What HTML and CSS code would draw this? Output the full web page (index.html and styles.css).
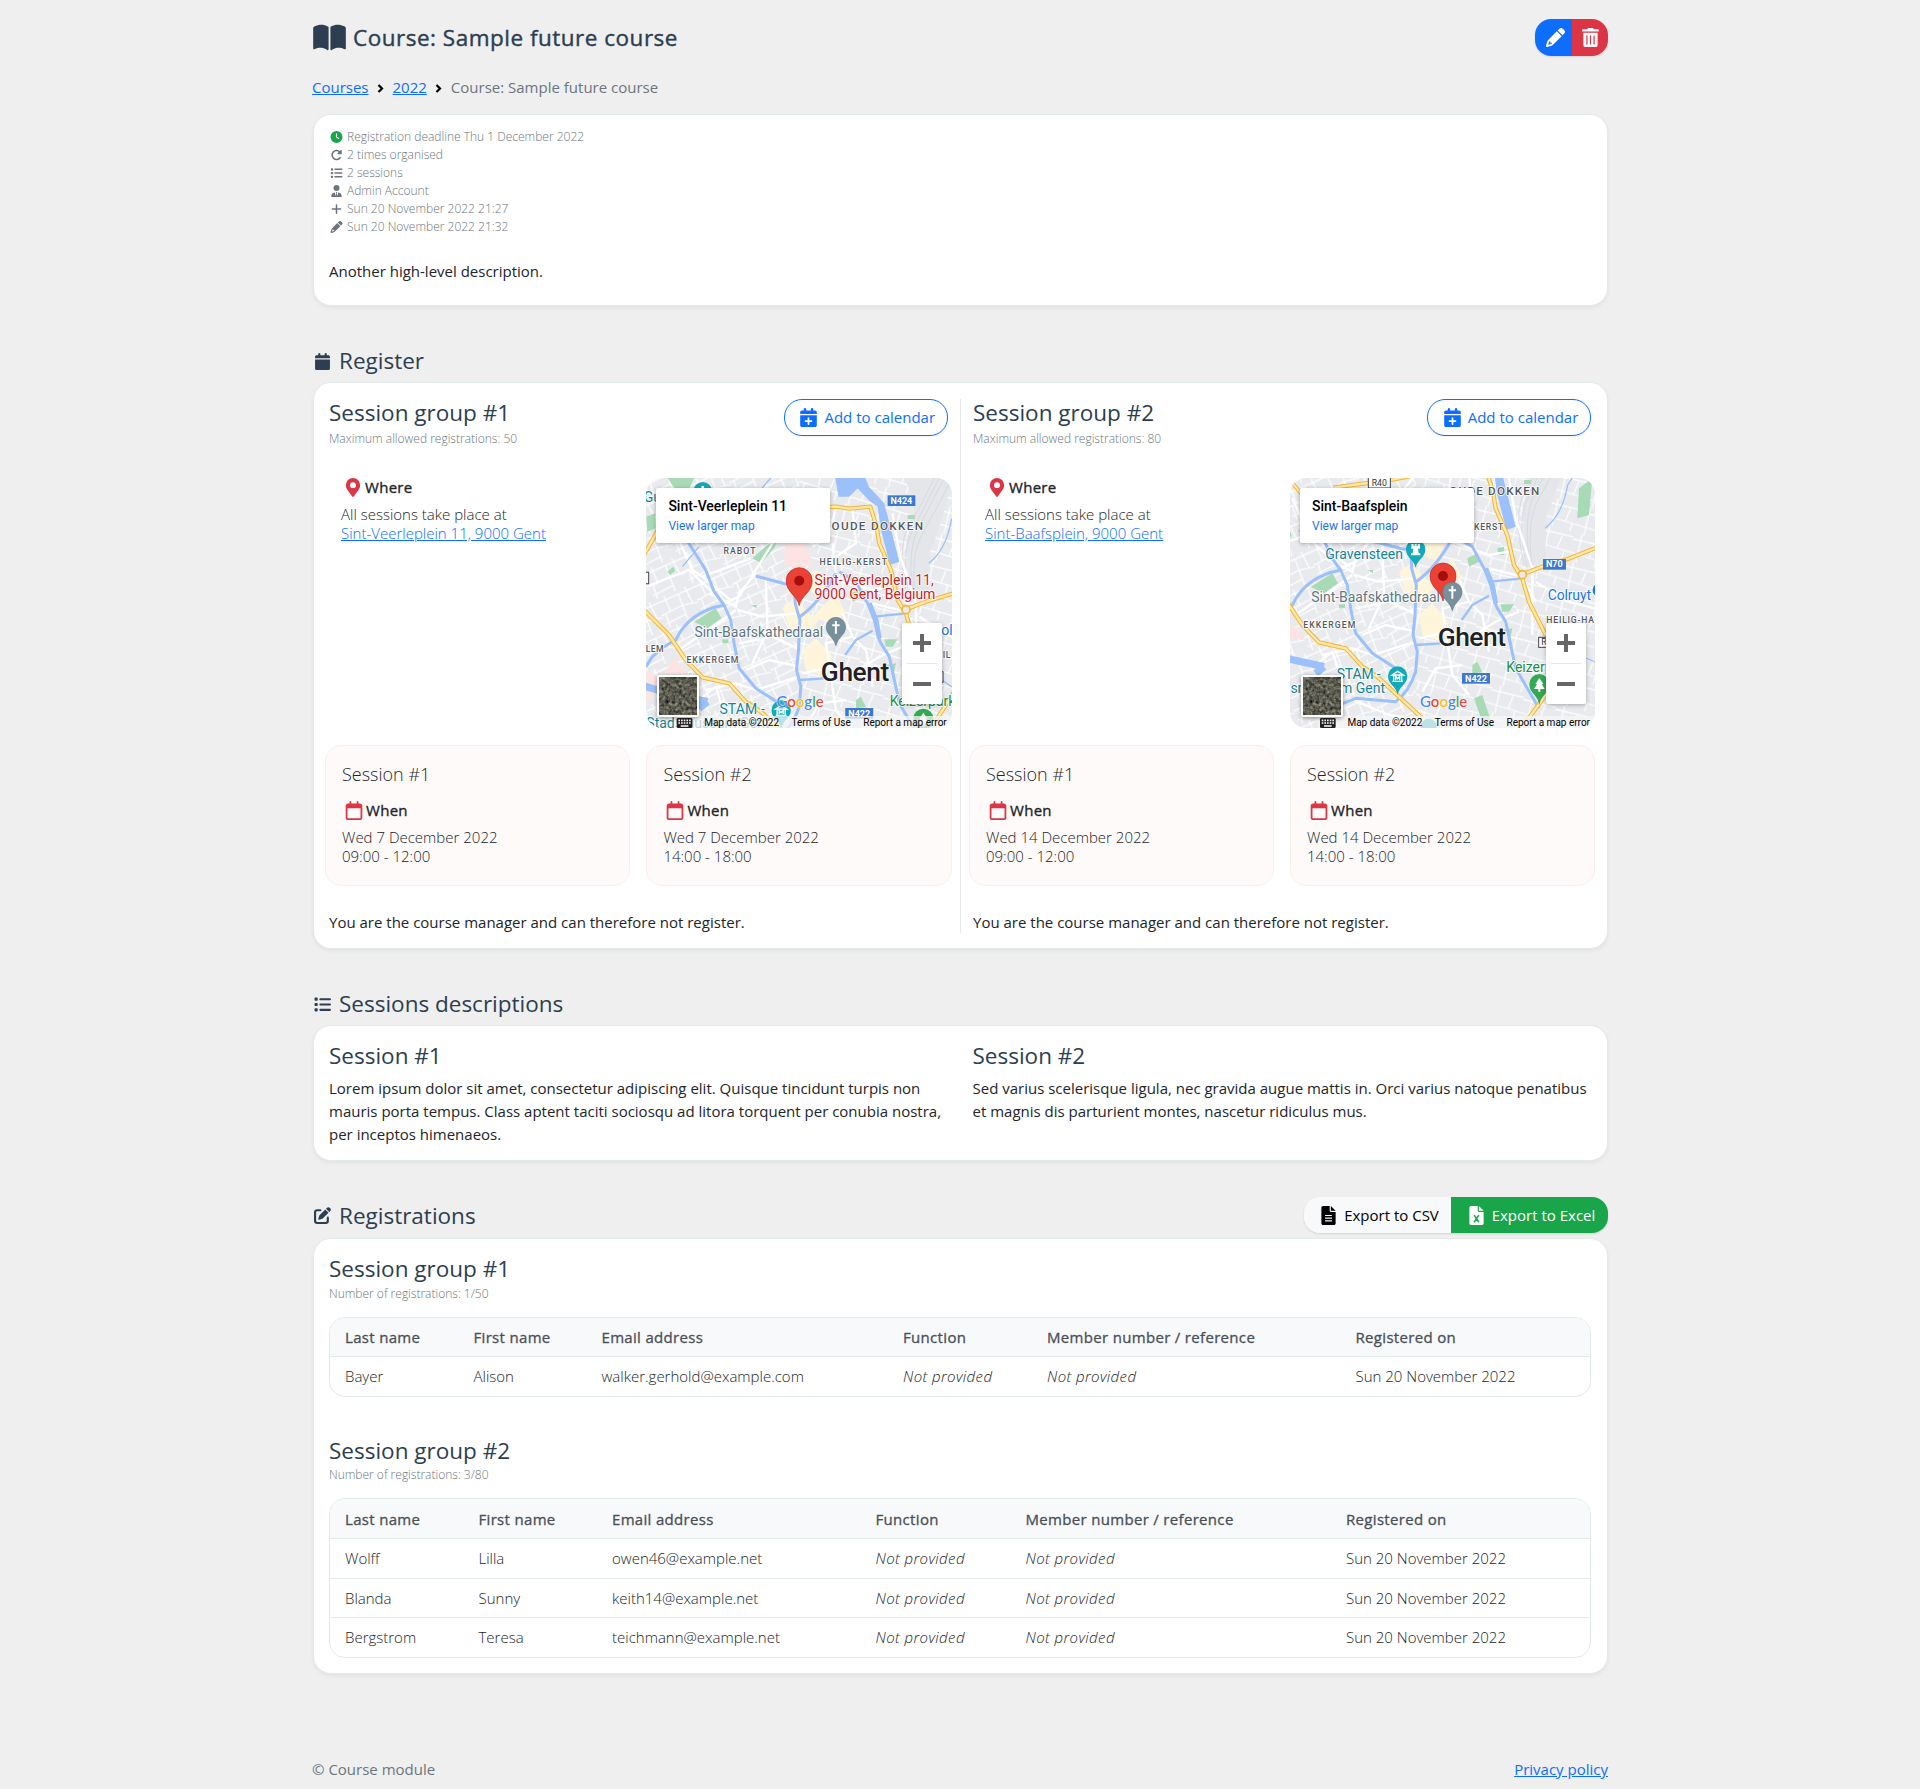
FILE: index.html
```html
<!DOCTYPE html>
<html lang="en">
<head>
<meta charset="utf-8">
<title>Course: Sample future course</title>
<link rel="stylesheet" href="styles.css">
</head>
<body>
<svg class="defs" aria-hidden="true">
  <defs>
    <symbol id="i-book" viewBox="0 0 576 512"><path d="M144.3 32C106.900 31.300 63.700 41.400 18.600 61.300C7.200 66.300 0 78 0 90.400V448c0 11.600 12 19.600 22.400 14.700c126.300-59.100 219.800 11 223.800 14C249 478.900 252.500 480 256 480c12.400 0 16-11.400 16-16V80c0-5.200-2.500-10-6.800-13C263.300 65.600 216.700 33.400 144.300 32zM557.400 61.300c-45.100-19.800-88.500-29.600-125.700-29.300c-72.400 1.300-118.100 33.600-120.900 35C306.500 70 304 74.800 304 80v384c0 4.400 3.500 16 16 16c3.500 0 6.900-1.100 9.800-3.300c3.900-3 97.400-73.200 223.800-14C564 467.600 576 459.600 576 448V90.400C576 78 568.800 66.300 557.400 61.300z"/></symbol>
    <symbol id="i-pencil" viewBox="0 0 512 512"><path fill-rule="evenodd" d="M421.600 219.700 291.700 89.800 58.600 322.900c-10.400 10.400-18 23.300-22.200 37.400L1 480.700c-2.500 8.400-.2 17.500 6.100 23.700s15.300 8.500 23.700 6.100l120.300-35.400c14.100-4.200 27-11.800 37.400-22.200zM160 399.400l-9.100 22.700c-4 3.100-8.500 5.400-13.300 6.900L59.400 452l23-78.100c1.400-4.900 3.800-9.400 6.900-13.300l22.700-9.100v32c0 8.800 7.200 16 16 16zM362.700 18.700 314.300 67.100 444.200 197l48.400-48.400c25-25 25-65.500 0-90.500L453.300 18.700c-25-25-65.500-25-90.600 0z"/></symbol>
    <symbol id="i-trash" viewBox="0 0 448 512"><path d="M32 464a48 48 0 0 0 48 48h288a48 48 0 0 0 48-48V128H32zm272-256a16 16 0 0 1 32 0v224a16 16 0 0 1-32 0zm-96 0a16 16 0 0 1 32 0v224a16 16 0 0 1-32 0zm-96 0a16 16 0 0 1 32 0v224a16 16 0 0 1-32 0zM432 32H312l-9.400-18.700A24 24 0 0 0 281.100 0H166.800a23.700 23.700 0 0 0-21.400 13.300L136 32H16A16 16 0 0 0 0 48v32a16 16 0 0 0 16 16h416a16 16 0 0 0 16-16V48a16 16 0 0 0-16-16z"/></symbol>
    <symbol id="i-clock" viewBox="0 0 512 512"><path fill-rule="evenodd" d="M256 512a256 256 0 1 0 0-512 256 256 0 0 0 0 512zM232 120V256c0 8 4 15.500 10.700 20l96 64c11 7.400 25.900 4.400 33.300-6.700s4.400-25.900-6.700-33.300L280 243.200V120c0-13.300-10.700-24-24-24s-24 10.700-24 24z"/></symbol>
    <symbol id="i-redo" viewBox="0 0 512 512"><path d="M410 370A190 190 0 1 1 400 128" fill="none" stroke="currentColor" stroke-width="66" stroke-linecap="round"/><path d="M480 60v140q0 24-24 24H316q-40-5-16-38L440 46q34-22 40 14z"/></symbol>
    <symbol id="i-list" viewBox="0 0 512 512"><path d="M40 48h48q24 0 24 24v48q0 24-24 24H40q-24 0-24-24V72q0-24 24-24zm0 160h48q24 0 24 24v48q0 24-24 24H40q-24 0-24-24v-48q0-24 24-24zm0 160h48q24 0 24 24v48q0 24-24 24H40q-24 0-24-24v-48q0-24 24-24zM192 64h288a32 32 0 0 1 0 64H192a32 32 0 0 1 0-64zm0 160h288a32 32 0 0 1 0 64H192a32 32 0 0 1 0-64zm0 160h288a32 32 0 0 1 0 64H192a32 32 0 0 1 0-64z"/></symbol>
    <symbol id="i-user" viewBox="0 0 448 512"><path d="M224 256a128 128 0 1 0 0-256 128 128 0 0 0 0 256zm-15 42c-10 0-17 12-12 21l16 32-29 114-33-134c-2-8-10-14-18-12C57 337 0 400 0 482c0 16 14 30 30 30h388c16 0 30-14 30-30 0-82-57-145-133-163-8-2-16 4-18 12l-33 134-29-114 16-32c5-9-2-21-12-21z"/></symbol>
    <symbol id="i-plus" viewBox="0 0 448 512"><path d="M256 80a32 32 0 0 0-64 0v144H48a32 32 0 0 0 0 64h144v144a32 32 0 0 0 64 0V288h144a32 32 0 0 0 0-64H256z"/></symbol>
    <symbol id="i-cal" viewBox="0 0 448 512"><path d="M96 32V64H48C21.500 64 0 85.500 0 112v48H448V112c0-26.500-21.500-48-48-48H352V32a32 32 0 0 0-64 0V64H160V32a32 32 0 0 0-64 0zM448 192H0V464c0 26.500 21.500 48 48 48H400c26.500 0 48-21.500 48-48z"/></symbol>
    <symbol id="i-calplus" viewBox="0 0 448 512"><path fill-rule="evenodd" d="M96 32V64H48C21.500 64 0 85.500 0 112v48H448V112c0-26.500-21.500-48-48-48H352V32a32 32 0 0 0-64 0V64H160V32a32 32 0 0 0-64 0zM448 192H0V464c0 26.500 21.500 48 48 48H400c26.500 0 48-21.500 48-48zM224 248a24 24 0 0 1 24 24v56h56a24 24 0 0 1 0 48h-56v56a24 24 0 0 1-48 0v-56h-56a24 24 0 0 1 0-48h56v-56a24 24 0 0 1 24-24z"/></symbol>
    <symbol id="i-calday" viewBox="0 0 448 512"><path fill-rule="evenodd" d="M152 24a24 24 0 0 0-48 0V64H64C28.700 64 0 92.700 0 128V448c0 35.300 28.700 64 64 64H384c35.300 0 64-28.700 64-64V128c0-35.300-28.700-64-64-64H344V24a24 24 0 0 0-48 0V64H152zM48 192H400V448q0 16-16 16H64q-16 0-16-16z"/></symbol>
    <symbol id="i-pin" viewBox="0 0 384 512"><path fill-rule="evenodd" d="M172.300 501.700C27 291 0 269.400 0 192a192 192 0 0 1 384 0c0 77.400-27 99-172.300 309.700-9.500 13.800-29.900 13.800-39.400 0zM192 272a80 80 0 1 0 0-160 80 80 0 0 0 0 160z"/></symbol>
    <symbol id="i-edit" viewBox="0 0 512 512"><path d="M490.300 40.400c21.900 21.900 21.900 57.300 0 79.200l-30 30.100-98-98 30.100-30c21.900-21.900 57.300-21.900 79.200 0zM172.400 241.700 339.700 74.300l98 98-167.400 167.300c-6.100 6.200-13.600 10.800-21.900 13.600l-88.800 29.600c-20 5-36-10-30.400-30.400l29.600-88.800c2.800-8.300 7.400-15.800 13.600-21.900zM192 64a32 32 0 0 1 0 64H96a32 32 0 0 0-32 32v256a32 32 0 0 0 32 32h256a32 32 0 0 0 32-32v-96a32 32 0 0 1 64 0v96a96 96 0 0 1-96 96H96a96 96 0 0 1-96-96V160a96 96 0 0 1 96-96z"/></symbol>
    <symbol id="i-csv" viewBox="0 0 384 512"><path fill-rule="evenodd" d="M256 0v128h128zM224 128V0H48C21.500 0 0 21.500 0 48v416c0 26.500 21.500 48 48 48h288c26.500 0 48-21.500 48-48V160H256c-17.700 0-32-14.300-32-32zM112 240h160a16 16 0 0 1 0 32H112a16 16 0 0 1 0-32zm0 72h160a16 16 0 0 1 0 32H112a16 16 0 0 1 0-32zm0 72h160a16 16 0 0 1 0 32H112a16 16 0 0 1 0-32z"/></symbol>
    <symbol id="i-xls" viewBox="0 0 384 512"><path d="M256 0v128h128zM224 128V0H48C21.500 0 0 21.500 0 48v416c0 26.500 21.500 48 48 48h288c26.500 0 48-21.500 48-48V160H256c-17.700 0-32-14.300-32-32z"/><path d="M138 258 246 424M246 258 138 424" stroke="#19a54a" stroke-width="42" stroke-linecap="round"/></symbol>

    <pattern id="streets" width="116" height="94" patternUnits="userSpaceOnUse" patternTransform="rotate(-24)">
      <path d="M0 12H116M0 52L70 47L116 58M30 0V50M72 12L68 94M98 0L101 56M14 52L10 94M0 80L68 76" fill="none" stroke="#fff" stroke-width="3.500"/>
    </pattern>
    <pattern id="streets-east" width="100" height="84" patternUnits="userSpaceOnUse" patternTransform="rotate(17)">
      <path d="M0 20L100 14M0 60H100M24 0L30 84M68 20L64 60M86 60V84" fill="none" stroke="#fff" stroke-width="3.500"/>
    </pattern>
    <filter id="aerial" color-interpolation-filters="sRGB"><feTurbulence type="fractalNoise" baseFrequency=".3" numOctaves="4" seed="8"/><feColorMatrix values=".5 .4 0 0 -.09  .45 .45 0 0 -.09  .35 .4 0 0 -.06  0 0 0 0 1"/></filter>

    <g id="city">
      <rect x="0" y="0" width="1060" height="900" fill="#e8eaed"/>
      <rect x="0" y="0" width="480" height="900" fill="url(#streets)"/>
      <rect x="480" y="0" width="580" height="900" fill="url(#streets-east)"/>
      <path d="M790 20Q850 110 800 210L812 390H870V250Q920 130 936 24z" fill="#e4e6ea"/>
      <g fill="#fde4e2"><path d="M437 220 490 205 520 275 480 305 435 280zM75 610 105 565 150 612zM21 700 80 640 40 610 0 590V700z"/></g>
      <g fill="#fef5da"><path d="M430 415 465 385 520 440 590 370 620 430 580 460 540 445 520 480 490 500 450 470zM490 540 530 505 580 560 560 620 500 600zM525 300 570 320 545 380 500 360z"/></g>
      <g fill="#a8dab5"><path d="M85 24H165L150 58H110zM340 265 385 225 410 220 405 235 365 280zM165 455 230 415 247 445 205 475zM85 305 103 290 108 303 93 315zM22 140 48 130 50 175 25 185zM140 195H165V225zM250 508H268V520H250zM335 405H352V415zM650 690 665 680 680 712 650 715zM735 508H775L760 530H740zM635 370 665 355 670 380 640 395zM725 340 745 335 745 360 728 360zM805 135H827V147H805zM655 790 680 780 710 870 690 890zM970 160 1010 130 1000 240 965 250zM740 585 770 580 765 605z"/></g>
      <g fill="none" stroke="#c9ccd3" stroke-width="1.500"><path d="M900 24Q860 100 820 180T815 400M915 24Q870 110 835 180T825 400M885 24Q850 100 810 165T805 390M930 40Q890 120 850 190T830 400"/></g>
      <g fill="none" stroke="#fff" stroke-width="7" stroke-linejoin="round"><path d="M21 350 150 300 255 400 300 380 400 220 510 80M110 190 160 300 190 320 335 265M120 540 250 450 290 420M295 420 370 440 470 430M210 370 290 410 300 370 350 310M190 320 280 395M300 520 400 500 475 535M320 600 390 570 480 590M490 610 580 590 640 610 720 560 790 530M610 430 640 500 680 540 700 650M640 500 560 520 590 720 640 780M700 400 800 425 840 500M580 220 590 320 700 360 760 350M590 110 570 200 520 230M760 130 780 250 830 400 830 600M840 440 936 500 1018 520M200 660 290 640 350 660 480 620M180 690 230 650 270 774M280 790 400 840 530 860M640 120 650 220 590 260M380 330 385 480 340 580M500 770 540 700 620 690"/></g>
      <g fill="none" stroke="#9cc0fa" stroke-width="9" stroke-linejoin="round">
        <path fill="#9cc0fa" stroke="none" d="M588 24H678L690 52 735 100 780 275 752 285 725 180 715 110 690 92 655 55 630 80H598z"/>
        <path d="M140 205 200 300 225 365 255 405 275 450 285 520 300 595 350 655 420 700M255 405Q150 425 110 510Q70 530 40 560L21 590M350 318 440 342 465 342 468 400 482 450 478 540 472 600 485 650 480 710Q460 770 420 800L300 790 200 830M482 440Q540 400 590 310M600 305 650 335 690 410 705 450 722 515M722 515 750 560 780 700 850 820"/>
        <path stroke-width="15" d="M690 400 710 450 720 505"/>
        <path stroke-width="7" d="M705 440 800 430M618 555 650 510 700 482M478 630 560 625"/>
        <path stroke-width="22" d="M15 648 75 665M100 672 205 695M180 715 205 695"/>
        <path stroke-width="4" d="M395 24Q360 60 345 95M868 280Q920 240 936 150L965 105M130 290 180 230M865 600 936 650 1018 680"/>
      </g>
      <g fill="none" stroke-linejoin="round">
        <path stroke="#f7b52c" stroke-width="13" d="M15 420 90 495 140 570 190 622 270 640 320 695 365 725 500 850M233 158 403 135 520 112 590 110 630 116 693 110 712 170 720 220 755 300 775 390 800 430 820 500 870 600M15 255 60 175 90 100M800 418 860 395 936 372 1030 335M960 640 910 720 870 780 790 890"/>
        <path stroke="#fde9b0" stroke-width="7" d="M15 420 90 495 140 570 190 622 270 640 320 695 365 725 500 850M233 158 403 135 520 112 590 110 630 116 693 110 712 170 720 220 755 300 775 390 800 430 820 500 870 600M15 255 60 175 90 100M800 418 860 395 936 372 1030 335M960 640 910 720 870 780 790 890"/>
        <circle cx="800" cy="419" r="12" fill="#e8eaed" stroke="#f7b52c" stroke-width="5"/>
      </g>
    </g>
    <g id="church"><path d="M0 42C-5 18-29 10-29-14a29 29 0 0 1 58 0C29 10 5 18 0 42z" fill="#78909c" stroke="#607d8b" stroke-width="2"/><path d="M0-32V6M-11-19H11" stroke="#fff" stroke-width="6"/></g>
    <g id="place"><path d="M0 75C-5 45-39 35-39 0a39 39 0 0 1 78 0C39 35 5 45 0 75z" fill="#ea4335" stroke="#c5221f" stroke-width="2"/><circle r="15" fill="#a50e0e"/></g>
    <g id="museum"><path d="M0 52C-5 25-29 22-29-4a29 29 0 0 1 58 0C29 22 5 25 0 52z" fill="#12a9b8"/><path d="M-17-7 0-18 17-7zM-16 12H16M-12-5V11M12-5V11M-6 9V-3L0 4 6-3V9" fill="none" stroke="#fff" stroke-width="4"/></g>
    <g id="park"><path d="M0 57C-5 25-30 22-30-6a30 30 0 0 1 60 0C30 22 5 25 0 57z" fill="#34a853"/><path d="M0-24 12-6H7L16 9H3V17H-3V9H-16L-7-6H-12z" fill="#fff"/></g>
    <g id="keys"><rect width="47" height="30" rx="4" fill="#222"/><path d="M5 7H43M5 15H43" stroke="#fff" stroke-width="5" stroke-dasharray="5 3"/><path d="M12 24H35" stroke="#fff" stroke-width="4"/></g>
  </defs>
</svg>

<div class="container">
  <header class="page-head">
    <h1><svg class="ic-book"><use href="#i-book"/></svg>Course: Sample future course</h1>
    <div class="btn-group">
      <a class="btn btn-blue"><svg class="ic-btn"><use href="#i-pencil"/></svg></a>
      <a class="btn btn-red"><svg class="ic-btn"><use href="#i-trash"/></svg></a>
    </div>
  </header>

  <nav class="crumbs"><a>Courses</a><svg viewBox="0 0 7 9"><path d="M1.500 1 5 4.500 1.500 8"/></svg><a>2022</a><svg viewBox="0 0 7 9"><path d="M1.500 1 5 4.500 1.500 8"/></svg><span>Course: Sample future course</span></nav>

  <section class="card about">
    <ul class="meta">
      <li><svg class="green"><use href="#i-clock"/></svg><span>Registration deadline Thu 1 December 2022</span></li>
      <li><svg><use href="#i-redo"/></svg><span>2 times organised</span></li>
      <li><svg><use href="#i-list"/></svg><span>2 sessions</span></li>
      <li><svg><use href="#i-user"/></svg><span>Admin Account</span></li>
      <li><svg><use href="#i-plus"/></svg><span>Sun 20 November 2022 21:27</span></li>
      <li><svg><use href="#i-pencil"/></svg><span>Sun 20 November 2022 21:32</span></li>
    </ul>
    <p>Another high-level description.</p>
  </section>

  <h2 class="section-head"><svg><use href="#i-cal"/></svg>Register</h2>
  <section class="card register">
    <div class="group">
      <div class="group-head">
        <div><h3>Session group #1</h3><small>Maximum allowed registrations: 50</small></div>
        <a class="btn btn-outline"><svg><use href="#i-calplus"/></svg>Add to calendar</a>
      </div>
      <div class="tiles">
        <div class="where">
          <h4><svg><use href="#i-pin"/></svg>Where</h4>
          <p>All sessions take place at<br><a>Sint-Veerleplein 11, 9000 Gent</a></p>
        </div>
        <div class="map">
          <svg class="map-art" viewBox="21 24 915 750" preserveAspectRatio="none">
            <use href="#city"/>
            <circle cx="191" cy="64" r="28" fill="#12a9b8"/><path d="M191 48V60" stroke="#fff" stroke-width="8"/>
            <g class="halo">
              <text x="14" y="95" class="poi teal">Gu</text>
              <text x="253" y="251" class="area" textLength="98">RABOT</text>
              <text x="577" y="180" class="area big" textLength="276">OUDE DOKKEN</text>
              <text x="541" y="284" class="area" textLength="204">HEILIG-KERST</text>
              <text x="20" y="545" class="area" textLength="56">LEM</text>
              <text x="142" y="578" class="area" textLength="158">EKKERGEM</text>
              <text x="910" y="564" class="area">IL</text>
              <text x="166" y="500" class="poi grey" textLength="386">Sint-Baafskathedraal</text>
              <text x="545" y="633" class="city" textLength="205">Ghent</text>
              <text x="526" y="346" class="poi red" textLength="357">Sint-Veerleplein 11,</text>
              <text x="526" y="387" class="poi red" textLength="362">9000 Gent, Belgium</text>
              <text x="906" y="494" class="poi blue">ol</text>
              <text x="241" y="731" class="poi teal" textLength="136">STAM -</text>
              <text x="22" y="773" class="poi teal">Stadsmuseum Gent</text>
              <text x="751" y="708" class="poi green">Keizerpark</text>
            </g>
            <path d="M15 307H29V341H15M905 605H911V637H905" fill="#fff" stroke="#444" stroke-width="3"/>
            <rect x="745" y="76" width="83" height="32" fill="#3b78ce"/><text x="786" y="102" class="shield">N424</text>
            <rect x="618" y="714" width="84" height="32" fill="#3b78ce"/><text x="660" y="740" class="shield">N422</text>
            <use href="#church" x="590" y="485"/><use href="#museum" x="426" y="724"/><use href="#park" x="852" y="752"/>
            <use href="#place" x="480" y="332"/>
            <rect x="105" y="738" width="831" height="36" fill="#f5f5f5" opacity=".75"/>
            <use href="#keys" x="113" y="744"/>
          </svg>
          <div class="map-info"><b>Sint-Veerleplein 11</b><a>View larger map</a></div>
          <svg class="map-thumb"><rect width="38" height="38" filter="url(#aerial)"/></svg>
          <div class="map-zoom"><i class="z-in"></i><i class="z-out"></i></div>
          <div class="map-google"><span>G</span><span>o</span><span>o</span><span>g</span><span>l</span><span>e</span></div>
          <div class="map-foot"><span>Map data ©2022</span><span>Terms of Use</span><span>Report a map error</span></div>
        </div>
        <div class="session"><h4>Session #1</h4><h5><svg><use href="#i-calday"/></svg>When</h5><p>Wed 7 December 2022<br>09:00 - 12:00</p></div>
        <div class="session"><h4>Session #2</h4><h5><svg><use href="#i-calday"/></svg>When</h5><p>Wed 7 December 2022<br>14:00 - 18:00</p></div>
      </div>
      <p class="notice">You are the course manager and can therefore not register.</p>
    </div>
    <div class="group">
      <div class="group-head">
        <div><h3>Session group #2</h3><small>Maximum allowed registrations: 80</small></div>
        <a class="btn btn-outline"><svg><use href="#i-calplus"/></svg>Add to calendar</a>
      </div>
      <div class="tiles">
        <div class="where">
          <h4><svg><use href="#i-pin"/></svg>Where</h4>
          <p>All sessions take place at<br><a>Sint-Baafsplein, 9000 Gent</a></p>
        </div>
        <div class="map">
          <svg class="map-art" viewBox="30 24 915 750" preserveAspectRatio="none">
            <use href="#city" x="-73" y="-105"/>
            <path d="M25 25 80 90" stroke="#f7b52c" stroke-width="12"/><path d="M25 25 80 90" stroke="#fde9b0" stroke-width="6"/>
            <g class="halo">
              <text x="508" y="75" class="area big" textLength="272">OUDE DOKKEN</text>
              <text x="582" y="179" class="area" textLength="90">KERST</text>
              <text x="70" y="473" class="area" textLength="158">EKKERGEM</text>
              <text x="799" y="458" class="area" textLength="145">HEILIG-HA</text>
              <text x="136" y="267" class="poi teal" textLength="233">Gravensteen</text>
              <text x="803" y="390" class="poi blue" textLength="130">Colruyt</text>
              <text x="94" y="396" class="poi grey" textLength="386">Sint-Baafskathedraal</text>
              <text x="473" y="528" class="city" textLength="205">Ghent</text>
              <text x="170" y="627" class="poi teal" textLength="132">STAM -</text>
              <text x="315" y="669" class="poi teal" text-anchor="end">smuseum Gent</text>
              <text x="679" y="606" class="poi green">Keizerpark</text>
            </g>
            <circle cx="958" cy="360" r="20" fill="#1a73e8"/>
            <rect x="265" y="20" width="66" height="34" fill="#fff" stroke="#444" stroke-width="3"/><text x="298" y="48" class="route">R40</text>
            <rect x="776" y="502" width="60" height="30" fill="#fff" stroke="#444" stroke-width="3"/><text x="792" y="526" class="route">R</text>
            <rect x="789" y="267" width="69" height="32" fill="#3b78ce"/><text x="823" y="291" class="shield">N70</text>
            <rect x="546" y="609" width="84" height="32" fill="#3b78ce"/><text x="588" y="636" class="shield">N422</text>
            <path d="M407 293C402 268 378 264 378 238a29 29 0 0 1 58 0C436 264 412 268 407 293z" fill="#12a9b8"/><path d="M393 256H421V250H416L414 236H420V222H413V228H410V222H404V228H401V222H394V236H400L398 250H393z" fill="#fff"/>
            <use href="#place" x="489" y="318"/><use href="#church" x="517" y="380"/>
            <use href="#museum" x="353" y="622"/><use href="#park" x="778" y="648"/>
            <circle cx="446" cy="770" r="24" fill="#12a9b8"/>
            <rect x="114" y="738" width="831" height="36" fill="#f5f5f5" opacity=".75"/>
            <use href="#keys" x="120" y="744"/>
          </svg>
          <div class="map-info"><b>Sint-Baafsplein</b><a>View larger map</a></div>
          <svg class="map-thumb"><rect width="38" height="38" filter="url(#aerial)"/></svg>
          <div class="map-zoom"><i class="z-in"></i><i class="z-out"></i></div>
          <div class="map-google"><span>G</span><span>o</span><span>o</span><span>g</span><span>l</span><span>e</span></div>
          <div class="map-foot"><span>Map data ©2022</span><span>Terms of Use</span><span>Report a map error</span></div>
        </div>
        <div class="session"><h4>Session #1</h4><h5><svg><use href="#i-calday"/></svg>When</h5><p>Wed 14 December 2022<br>09:00 - 12:00</p></div>
        <div class="session"><h4>Session #2</h4><h5><svg><use href="#i-calday"/></svg>When</h5><p>Wed 14 December 2022<br>14:00 - 18:00</p></div>
      </div>
      <p class="notice">You are the course manager and can therefore not register.</p>
    </div>
  </section>

  <h2 class="section-head"><svg><use href="#i-list"/></svg>Sessions descriptions</h2>
  <section class="card descriptions">
    <div><h3>Session #1</h3><p>Lorem ipsum dolor sit amet, consectetur adipiscing elit. Quisque tincidunt turpis non mauris porta tempus. Class aptent taciti sociosqu ad litora torquent per conubia nostra, per inceptos himenaeos.</p></div>
    <div><h3>Session #2</h3><p>Sed varius scelerisque ligula, nec gravida augue mattis in. Orci varius natoque penatibus et magnis dis parturient montes, nascetur ridiculus mus.</p></div>
  </section>

  <div class="section-row">
    <h2 class="section-head"><svg><use href="#i-edit"/></svg>Registrations</h2>
    <div class="btn-group export">
      <a class="btn btn-light"><svg><use href="#i-csv"/></svg>Export to CSV</a>
      <a class="btn btn-green"><svg><use href="#i-xls"/></svg>Export to Excel</a>
    </div>
  </div>
  <section class="card registrations">
    <h3>Session group #1</h3><small>Number of registrations: 1/50</small>
    <div class="table-wrap">
      <table class="t-one">
        <colgroup><col class="c1"><col class="c2"><col class="c3"><col class="c4"><col class="c5"><col></colgroup>
        <thead><tr><th>Last name</th><th>First name</th><th>Email address</th><th>Function</th><th>Member number / reference</th><th>Registered on</th></tr></thead>
        <tbody><tr><td>Bayer</td><td>Alison</td><td>walker.gerhold@example.com</td><td><em>Not provided</em></td><td><em>Not provided</em></td><td>Sun 20 November 2022</td></tr></tbody>
      </table>
    </div>
    <h3>Session group #2</h3><small>Number of registrations: 3/80</small>
    <div class="table-wrap">
      <table class="t-two">
        <colgroup><col class="c1"><col class="c2"><col class="c3"><col class="c4"><col class="c5"><col></colgroup>
        <thead><tr><th>Last name</th><th>First name</th><th>Email address</th><th>Function</th><th>Member number / reference</th><th>Registered on</th></tr></thead>
        <tbody>
          <tr><td>Wolff</td><td>Lilla</td><td>owen46@example.net</td><td><em>Not provided</em></td><td><em>Not provided</em></td><td>Sun 20 November 2022</td></tr>
          <tr><td>Blanda</td><td>Sunny</td><td>keith14@example.net</td><td><em>Not provided</em></td><td><em>Not provided</em></td><td>Sun 20 November 2022</td></tr>
          <tr><td>Bergstrom</td><td>Teresa</td><td>teichmann@example.net</td><td><em>Not provided</em></td><td><em>Not provided</em></td><td>Sun 20 November 2022</td></tr>
        </tbody>
      </table>
    </div>
  </section>

  <footer><span>© Course module</span><a>Privacy policy</a></footer>
</div>
</body>
</html>
```
FILE: styles.css
```css
* { box-sizing: border-box; }
body { margin: 0; background: #efefef; font: 400 15px/23px "Open Sans", "Noto Sans", sans-serif; color: #212529; }
h1, h2, h3, h4, h5, p, ul { margin: 0; padding: 0; font-weight: 400; }
svg { fill: currentColor; flex: none; }
a { color: #0d6efd; text-decoration: underline; }
.defs { position: absolute; width: 0; height: 0; }
.container { width: 1296px; margin: 0 auto; height: 1789px; }

.page-head { display: flex; justify-content: space-between; padding-top: 19px; height: 74px; }
h1 { display: flex; align-items: center; height: 37px; font-size: 22.500px; letter-spacing: .5px; -webkit-text-stroke: .4px currentColor; color: #2c3e50; }
.ic-book { width: 33px; height: 29px; margin: 0 7px 0 1px; }
.btn { display: flex; align-items: center; justify-content: center; text-decoration: none; height: 37px; }
.btn svg { width: 19px; height: 19px; }
.btn-group { display: flex; height: 37px; border-radius: 16px; overflow: hidden; box-shadow: 0 1px 2px rgba(0,0,0,.12); }
.btn-blue, .btn-red { color: #fff; width: 36.500px; }
.btn-blue { background: #0d6efd; padding-left: 4px; }
.btn-red { background: #dc3545; padding-left: 1px; }

.crumbs { display: flex; align-items: center; height: 26px; color: #6c757d; }
.crumbs svg { width: 7px; height: 9px; margin: 2px 9px 0 8px; fill: none; stroke: #000; stroke-width: 2.200; }

.card { background: #fff; border: 1px solid #e3eaea; border-radius: 18px; box-shadow: 0 2px 4px rgba(0,0,0,.055); margin: 0 .5px; }
.about { margin-top: 14px; height: 192px; padding: 12px 15.500px; }
.meta { list-style: none; font-size: 12px; font-weight: 300; color: #6c757d; }
.meta li { display: flex; align-items: center; height: 18px; }
.meta svg { width: 13px; height: 12px; margin: 1px 4px 0 1px; }
.meta .green { color: #19a54a; }
.about p { margin-top: 25px; }

.section-head { display: flex; align-items: center; font-size: 22.500px; line-height: 28px; height: 28px; color: #2c3e50; }
.section-head svg { width: 17px; height: 17px; margin: 0 8px 0 2px; }
.register + .section-head, .about + .section-head { margin: 41px 0 7px; }
h3 { font-size: 22.500px; line-height: 28px; color: #2c3e50; }
small { display: block; font-size: 12px; line-height: 19px; font-weight: 300; color: #6c757d; padding-top: 1px; height: 19px; }

.register { display: flex; height: 567px; padding: 16px 0 15px; }
.group { width: 50%; padding: 0 8.250px 0 11.500px; }
.group + .group { border-left: 1px solid #e5e7e9; padding: 0 11.500px 0 8px; }
.group-head { display: flex; justify-content: space-between; height: 79px; padding: 0 4px 0 4px; }
.group-head small { margin-top: 1px; }
.btn-outline { width: 164px; padding-left: 3px; border: 1px solid #0d6efd; border-radius: 18px; box-shadow: 0 1px 2px rgba(0,0,0,.06); }
.btn-outline svg { margin-right: 6px; }
.tiles { display: grid; grid-template-columns: 1fr 1fr; gap: 17px 16px; }
.where { padding-left: 16px; }
.where h4, .session h5 { display: flex; align-items: center; font-size: 15px; font-weight: 400; letter-spacing: .3px; -webkit-text-stroke: .35px currentColor; height: 18px; }
.where h4 svg, .session h5 svg { width: 18px; height: 19px; color: #dc3545; margin: 0 3px 0 3px; stroke: none; }
.where p, .session p { line-height: 19px; font-weight: 300; }
.where p { margin-top: 9px; }

.map { position: relative; height: 250px; border-radius: 16px; overflow: hidden; font-family: Roboto, sans-serif; }
.map-art { display: block; width: 100%; height: 100%; }
.halo text { paint-order: stroke; stroke: #fff; stroke-width: 5px; stroke-linejoin: round; }
.poi { font-size: 42px; }
.area { font-size: 26px; font-weight: 500; letter-spacing: 2px; fill: #54585f; }
.area.big { font-size: 35px; }
.city { font-size: 79px; font-weight: 500; fill: #202124; }
.teal { fill: #128394; }
.grey { fill: #607580; }
.red { fill: #c5221f; }
.blue { fill: #1a73e8; }
.poi.green { fill: #238c45; }
.shield { font-size: 27px; font-weight: 700; fill: #fff; text-anchor: middle; }
.route { font-size: 26px; fill: #333; text-anchor: middle; }
.map-info { position: absolute; left: 10px; top: 10px; width: 174px; height: 55px; padding: 9px 12px; background: #fff; border-radius: 2px; box-shadow: 0 1px 4px rgba(0,0,0,.3); }
.map-info b, .map-info a { display: block; text-decoration: none; }
.map-info b { font-size: 14px; line-height: 18px; font-weight: 500; color: #000; }
.map-info a { font-size: 12px; line-height: 22px; color: #1a73e8; }
.map-thumb { position: absolute; left: 11px; top: 197px; width: 42px; height: 42px; border: 2px solid #fff; border-radius: 2px; box-shadow: 0 1px 4px rgba(0,0,0,.4); }
.map-zoom { position: absolute; left: 256px; top: 145px; width: 40px; height: 81px; background: #fff; border-radius: 2px; box-shadow: 0 1px 4px rgba(0,0,0,.3); }
.map-zoom i { display: block; width: 30px; height: 40px; margin-left: 5px; background: linear-gradient(#666, #666) center / 18px 4px no-repeat; }
.map-zoom .z-in { height: 41px; border-bottom: 1px solid #e6e6e6; background: linear-gradient(#666, #666) center / 18px 4px no-repeat, linear-gradient(#666, #666) center / 4px 18px no-repeat; }
.map-google { position: absolute; left: 130px; top: 213px; font: 500 15px/20px Lato, sans-serif; text-shadow: 0 0 1px #fff, 0 0 2px #fff; color: #4285f4; }
.map-google span:nth-child(2), .map-google span:nth-child(6) { color: #ea4335; }
.map-google span:nth-child(3) { color: #fbbc04; }
.map-google span:nth-child(5) { color: #34a853; }
.map-foot { position: absolute; right: 5px; bottom: -1px; display: flex; gap: 12.500px; font-size: 10px; line-height: 13px; color: #000; white-space: nowrap; }

.session { height: 141px; padding: 14px 16px; background: #fffafa; border: 1px solid #fdeeee; border-radius: 16px; }
.session h4 { font-size: 18px; line-height: 28px; font-weight: 300; }
.session h5 { margin: 13px 0 9px; }
.notice { margin: 25px 4px 0; }

.descriptions { display: flex; height: 136px; padding: 16px 0 0 15.500px; }
.descriptions > div { width: 643.500px; flex: none; }
.descriptions p { margin-top: 7px; width: 622px; }

.section-row { display: flex; justify-content: space-between; align-items: center; height: 36px; margin: 36px 0 5px; }
.section-row h2 { padding-top: 1px; }
.export { height: 36px; }
.export .btn { height: 36px; }
.export svg { margin-right: 6px; }
.btn-light { width: 147px; padding-left: 3px; background: #f8f9fb; color: #000; }
.btn-green { width: 157px; padding-left: 3px; background: #19a54a; color: #fff; }

.registrations { height: 436px; padding: 16px 15.500px; }
.table-wrap { margin: 15px 0 39px; border: 1px solid #e3eaea; border-radius: 16px; overflow: hidden; }
.table-wrap + h3 { padding-top: 1px; height: 28px; }
table { width: 100%; border-collapse: separate; border-spacing: 0; table-layout: fixed; }
th, td { padding: 0 15px; height: 39px; line-height: 23px; text-align: left; white-space: nowrap; font-weight: 300; }
th { background: #f8f9fb; font-weight: 400; letter-spacing: .32px; -webkit-text-stroke: .3px currentColor; color: #495057; }
td { border-top: 1px solid #e3eaea; }
em { letter-spacing: .4px; }
.t-one th { height: 38px; padding-top: 1px; }
.t-one td { height: 40px; }
.t-two tr:nth-child(odd) td { height: 40px; }
.t-two th { padding-top: 1px; }
.t-one .c1 { width: 128.500px; }
.t-one .c2 { width: 128px; }
.t-one .c3 { width: 301.500px; }
.t-one .c4 { width: 144px; }
.t-one .c5 { width: 308.500px; }
.t-two .c1 { width: 133.500px; }
.t-two .c2 { width: 133.500px; }
.t-two .c3 { width: 263.500px; }
.t-two .c4 { width: 150px; }
.t-two .c5 { width: 320.500px; }
.t-two thead th { height: 39px; }

footer { display: flex; justify-content: space-between; margin-top: 84px; color: #6c757d; }
```
